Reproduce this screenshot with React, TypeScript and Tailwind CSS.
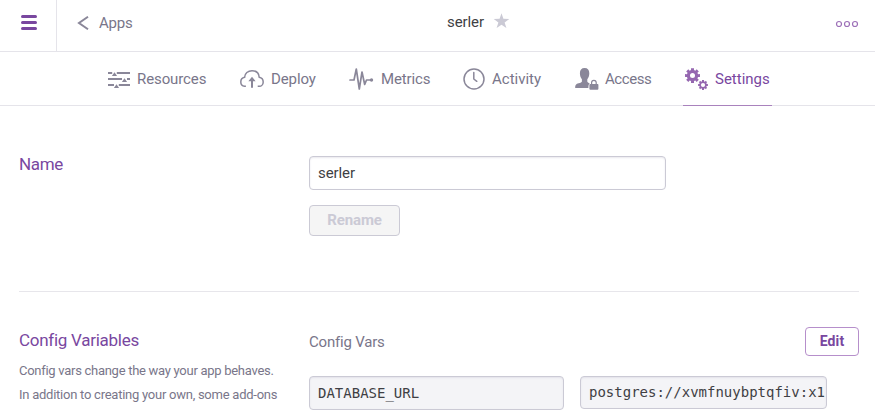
import type { ReactNode } from "react";

const GREY = "#8a8799";

function ResourcesIcon() {
  return (
    <svg width="24" height="24" viewBox="0 0 24 24" fill={GREY}>
      <path d="M1 5h4.200v2H1zM9.800 5H23v2H9.800zM1 11h14v2H1zM20 11H23v2h-3zM1 17h6v2H1zM11.800 17H23v2H11.800z" />
      <path d="M7.500 5.300l2.600 3.700H4.900zM17.500 11.300l2.600 3.700h-5.200zM9.500 17.300l2.600 3.700H6.900z" />
    </svg>
  );
}

function DeployIcon() {
  return (
    <svg width="26" height="24" viewBox="0 0 26 24" fill="none" stroke={GREY} strokeWidth="1.5">
      <path d="M6.900 19.300H5.600A4.400 4.400 0 0 1 1.800 14.900C1.800 12.400 3.500 10.700 5.600 10.300C5.700 6.300 9 3.700 13 3.700s6.900 2.500 7.200 6.500c2.500.5 4 2.300 4 4.700 0 2.500-1.700 4.400-4 4.400H18.700" />
      <path d="M13 20.800V13.500" strokeWidth="2" />
      <path d="M13 9.800l3.600 4.500H9.400z" fill={GREY} stroke="none" />
    </svg>
  );
}

function MetricsIcon() {
  return (
    <svg width="26" height="24" viewBox="0 0 26 24" fill="none" stroke={GREY} strokeWidth="1.7" strokeLinejoin="round" strokeLinecap="round">
      <path d="M1 13h4L7.300 2l3 20L13 5l2.700 12.500L17.500 13H22" />
      <circle cx="22.500" cy="13" r="1.700" fill={GREY} stroke="none" />
    </svg>
  );
}

function ActivityIcon() {
  return (
    <svg width="24" height="24" viewBox="0 0 24 24" fill="none" stroke={GREY} strokeWidth="1.500">
      <circle cx="12" cy="12" r="10" />
      <path d="M11.800 5.500v6.500l3 2.300" strokeLinecap="round" />
    </svg>
  );
}

function AccessIcon() {
  return (
    <svg width="24" height="24" viewBox="0 0 24 24" fill={GREY}>
      <path d="M9.600 1c3.200 0 4.700 2 4.700 5.300 0 2.600-.8 4.700-2 5.900v2.300c0 .8 1.100 1.300 2.500 2-1 .5-1.400 1.300-1.400 4.500H.2c0-3.400.9-3.900 3.400-4.700 2-.6 3.300-1 3.300-1.800v-2.300c-1.200-1.200-2-3.300-2-5.900C4.900 3 6.400 1 9.600 1z" />
      <path fillRule="evenodd" d="M15.200 17h.8v-1.400a2.900 2.900 0 0 1 5.800 0V17h.8q.8 0 .8.800v4q0 1-1 1h-7q-1 0-1-1v-4q0-.8.8-.8zM17.200 17h3.400v-1.400a1.700 1.700 0 0 0-3.400 0z" />
    </svg>
  );
}

function gear(cx: number, cy: number, outer: number, inner: number) {
  const points: string[] = [];
  for (let i = 0; i < 8; i++) {
    const a = (i * Math.PI) / 4;
    const add = (r: number, d: number) =>
      points.push(`${(cx + r * Math.cos(a + d)).toFixed(2)},${(cy + r * Math.sin(a + d)).toFixed(2)}`);
    add(inner, -0.26);
    add(outer, -0.2);
    add(outer, 0.2);
    add(inner, 0.26);
  }
  return points.join(" ");
}

function SettingsIcon() {
  return (
    <svg width="24" height="24" viewBox="0 0 24 24" fill="#9567b0">
      <polygon points={gear(7.5, 8.6, 7.6, 5.7)} />
      <circle cx="7.500" cy="8.600" r="2.500" fill="white" />
      <polygon points={gear(18, 18, 5, 3.8)} />
      <circle cx="18" cy="18" r="2.100" fill="white" />
    </svg>
  );
}

function Tab({ className, label, text, children }: { className: string; label: string; text: string; children: ReactNode }) {
  return (
    <a className={`flex h-[54px] shrink-0 items-center ${className}`}>
      <span className="flex w-[30px] shrink-0">{children}</span>
      <span className={`whitespace-nowrap text-[15px] leading-5 ${text}`}>{label}</span>
    </a>
  );
}

export default function App() {
  return (
    <div className="h-[413px] w-[875px] overflow-hidden bg-white font-['Roboto',sans-serif] text-[#79768a]">
      <header className="flex h-[52px] border-b border-[#e5e4ea]">
        <div className="flex w-[57px] shrink-0 flex-col gap-[3px] border-r border-[#e5e4ea] pl-[21px] pt-[15px]">
          <span className="h-[3px] w-4 rounded-full bg-[#79479f]" />
          <span className="h-[3px] w-4 rounded-full bg-[#79479f]" />
          <span className="h-[3px] w-4 rounded-full bg-[#79479f]" />
        </div>
        <div className="flex w-[390px] shrink-0 pl-5 pt-[13px]">
          <svg className="mt-[3px]" width="13" height="14" viewBox="0 0 13 14" fill="none" stroke={GREY} strokeWidth="2">
            <path d="M11 .8L2 7l9 6.200" />
          </svg>
          <span className="ml-[9px] text-[15px] leading-5 tracking-[-0.2px]">Apps</span>
        </div>
        <div className="flex flex-1 pt-3">
          <span className="w-[46px] text-[15px] leading-5 tracking-[-0.1px] text-[#3f3f44]">serler</span>
          <svg className="mt-[1px]" width="17" height="16" viewBox="0 0 17 16" fill="#cbcad5">
            <path d="M8.500 .3l1.900 5.500 5.900.1-4.700 3.500 1.800 5.700-4.900-3.300-4.900 3.300 1.800-5.700L.7 5.900l5.900-.1z" />
          </svg>
        </div>
        <svg className="mr-4 mt-5 shrink-0" width="24" height="8" viewBox="0 0 24 8" fill="none" stroke="#9d70b8" strokeWidth="1.200">
          <circle cx="4" cy="4" r="2.500" />
          <circle cx="12" cy="4" r="2.500" />
          <circle cx="20" cy="4" r="2.500" />
        </svg>
      </header>
      <nav className="flex h-[54px] border-b border-[#e5e4ea] pl-[107px]">
        <Tab className="w-[132px]" label="Resources" text="tracking-[-0.1px]"><ResourcesIcon /></Tab>
        <Tab className="w-[109px]" label="Deploy" text="pl-0.5 tracking-[-0.1px]"><DeployIcon /></Tab>
        <Tab className="w-[113px] pl-px" label="Metrics" text="pl-0.5 tracking-[-0.15px]"><MetricsIcon /></Tab>
        <Tab className="w-[112px] pl-px" label="Activity" text=""><ActivityIcon /></Tab>
        <Tab className="w-[110px] pl-0.5" label="Access" text="tracking-[-0.45px]"><AccessIcon /></Tab>
        <Tab className="w-[89px] border-b border-[#a982bd] pl-0.5" label="Settings" text="text-[#79479f]"><SettingsIcon /></Tab>
      </nav>
      <main className="pl-[19px] pr-4">
        <section className="flex h-[186px] border-b border-[#e7e6eb] pt-[50px]">
          <h2 className="w-[290px] shrink-0 text-[17px] leading-4 tracking-[-0.35px] text-[#79479f]">Name</h2>
          <div className="flex flex-col items-start">
            <div className="h-[34px] w-[357px] rounded-[4px] border border-[#cbcad5] px-2 text-[15px] leading-8 tracking-[-0.1px] text-[#3f3f44] shadow-[inset_0_1px_2px_#e9e8ee]">serler</div>
            <button className="mt-[15px] h-[31px] w-[91px] rounded-[4px] border border-[#cbcad5] bg-[#f5f5f5] text-[15px] font-bold tracking-[-0.1px] text-[#cbcad5]">Rename</button>
          </div>
        </section>
        <section className="flex pt-[35px]">
          <div className="w-[290px] shrink-0">
            <h2 className="text-[17px] leading-[26px] tracking-[-0.27px] text-[#79479f]">Config Variables</h2>
            <p className="mt-[6px] whitespace-nowrap text-[13px] leading-6 tracking-[-0.25px]">
              <span className="tracking-[-0.28px]">Config vars change the way your app behaves.</span>
              <br />
              In addition to creating your own, some add-ons
            </p>
          </div>
          <div className="flex-1">
            <div className="flex h-[29px] justify-between">
              <h3 className="text-[15px] leading-[30px] tracking-[-0.2px]">Config Vars</h3>
              <button className="h-[29px] w-[54px] rounded-[4px] border border-[#b68fcb] text-[14px] font-bold tracking-[0.1px] text-[#79479f]">Edit</button>
            </div>
            <div className="mt-5 flex gap-4 font-['DejaVu_Sans_Mono',monospace] text-[14px] leading-8 text-[#3f3f44]">
              <div className="h-[34px] w-[255px] rounded-[4px] border border-[#cbcad5] bg-[#f4f4f7] px-2 shadow-[inset_0_1px_2px_#e3e2ea]">DATABASE_URL</div>
              <div className="h-[33px] w-[247px] overflow-hidden whitespace-nowrap rounded-[4px] border border-[#cbcad5] bg-[#f4f4f7] pl-2 leading-[31px] shadow-[inset_0_1px_2px_#e3e2ea]">postgres://xvmfnuybptqfiv:x1</div>
            </div>
          </div>
        </section>
      </main>
    </div>
  );
}
